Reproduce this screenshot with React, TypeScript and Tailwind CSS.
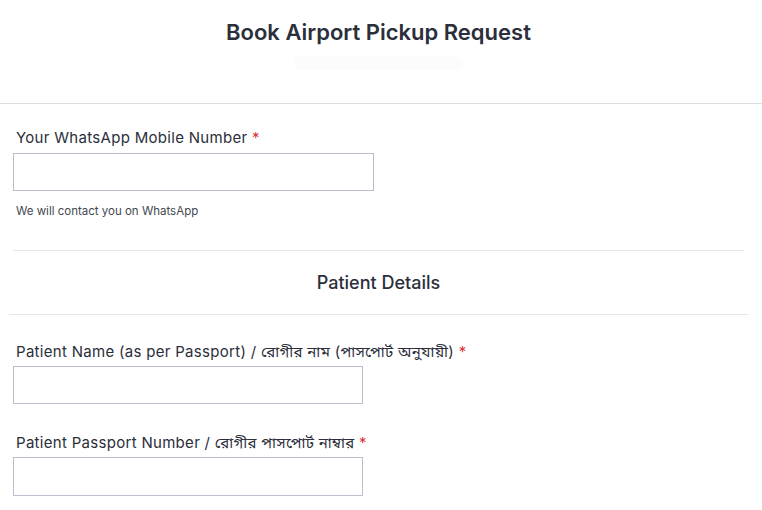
export default function App() {
  const font = { fontFamily: 'Inter, "Noto Sans", "Noto Sans Bengali", sans-serif' };
  const label = "block pl-[3px] text-[15px] leading-[20px] font-normal tracking-[0.3px] text-[#2b2e3a]";
  return (
    <div className="w-[762px] h-[510px] bg-white overflow-hidden" style={font}>
      <div className="h-[104px] border-b border-[#dcdce4] flex flex-col items-center pr-[5px]">
        <h1 className="mt-[18px] text-[22px] leading-[28px] font-semibold text-[#2b2f3b]">Book Airport Pickup Request</h1>
        <div className="mt-[10px] w-[170px] h-[14px] rounded-full bg-[#fcfcfc]"></div>
      </div>
      <div className="pl-[13px] pt-[24px]">
        <label className={label}>
          Your WhatsApp Mobile Number <span className="text-[#e03131]">*</span>
        </label>
        <input className="mt-[5px] block w-[361px] h-[38px] border border-[#bcbccc] bg-white outline-none" />
        <p className="mt-[12px] pl-[3px] text-[11.5px] leading-[16px] text-[#444851]">We will contact you on WhatsApp</p>
      </div>
      <div className="mt-[31px] ml-[13px] w-[731px] border-t border-[#e6e6e6]"></div>
      <div className="h-[63px] flex items-center justify-center pr-[5px] text-[18px] font-medium text-[#2b2f3b]">Patient Details</div>
      <div className="ml-[9px] w-[739px] border-t border-[#e6e6e6]"></div>
      <div className="pl-[13px] pt-[27px]">
        <label className={label}>
          Patient Name (as per Passport) / রোগীর নাম (পাসপোর্ট অনুযায়ী) <span className="text-[#e03131]">*</span>
        </label>
        <input className="mt-[4px] block w-[350px] h-[38px] border border-[#bcbccc] bg-white outline-none" />
        <label className={"mt-[29px] " + label}>
          Patient Passport Number / রোগীর পাসপোর্ট নাম্বার <span className="text-[#e03131]">*</span>
        </label>
        <input className="mt-[4px] block w-[350px] h-[39px] border border-[#bcbccc] bg-white outline-none" />
      </div>
    </div>
  );
}
